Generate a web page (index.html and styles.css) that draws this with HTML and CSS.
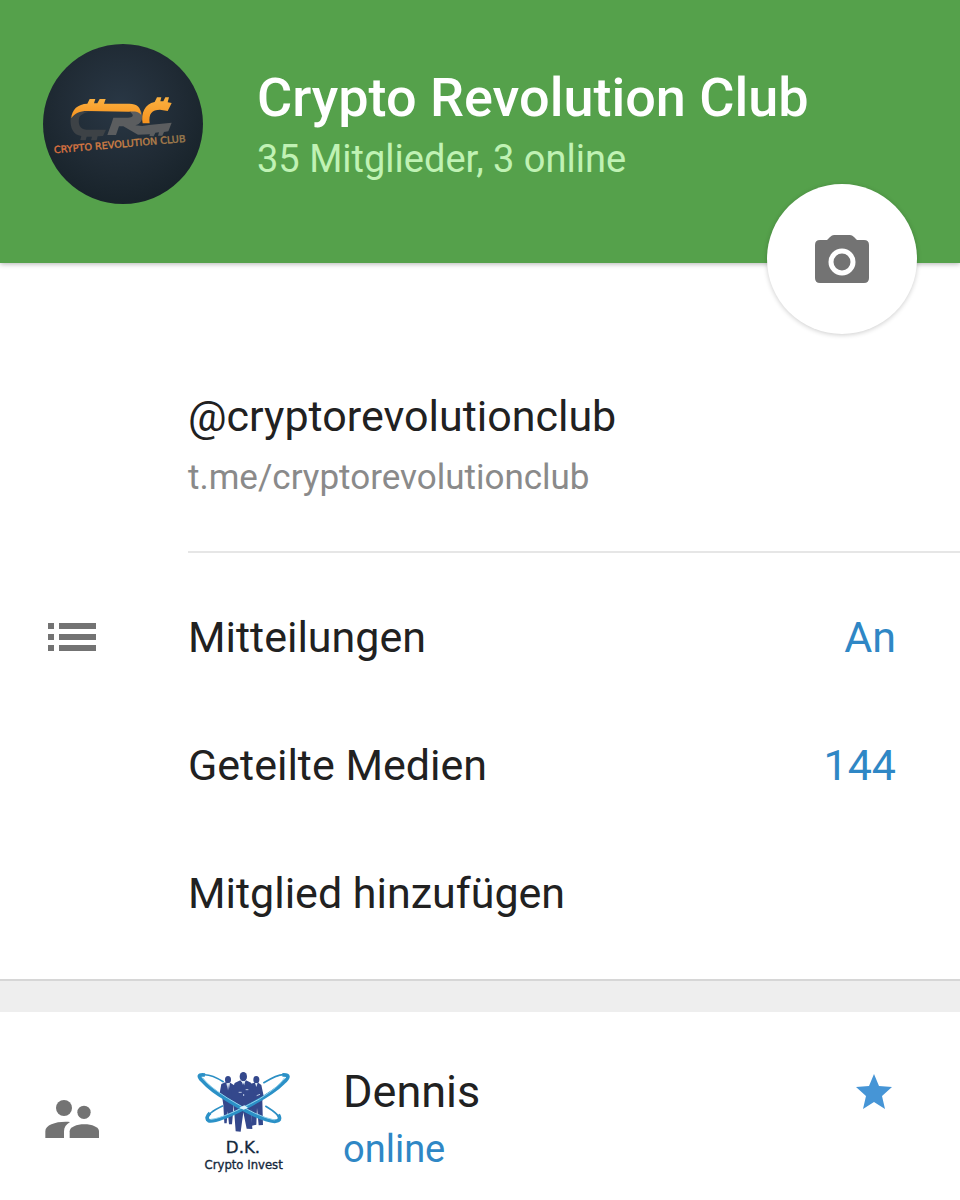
FILE: index.html
```html
<!DOCTYPE html>
<html lang="de">
<head>
    <meta charset="UTF-8">
    <meta name="viewport" content="width=device-width, initial-scale=1.0">
    <title>Crypto Revolution Club</title>
    <link rel="stylesheet" href="styles.css">
</head>
<body>
    <header class="header">
        <svg class="avatar" viewBox="27 28 480 480" role="img" aria-label="Logo">
            <defs>
                <radialGradient id="night" cx="48%" cy="38%" r="62%">
                    <stop offset="0" stop-color="#293745"/>
                    <stop offset="0.6" stop-color="#202b35"/>
                    <stop offset="1" stop-color="#18232a"/>
                </radialGradient>
                <linearGradient id="gold" x1="0" y1="0" x2="0" y2="1">
                    <stop offset="0" stop-color="#fbb040"/>
                    <stop offset="1" stop-color="#f7931e"/>
                </linearGradient>
                <linearGradient id="copper" x1="0" y1="0" x2="1" y2="0">
                    <stop offset="0" stop-color="#e0703f"/>
                    <stop offset="0.5" stop-color="#d08345"/>
                    <stop offset="1" stop-color="#9a7d4e"/>
                </linearGradient>
            </defs>
            <circle cx="267" cy="268" r="240" fill="url(#night)"/>
            <path d="M110 248 C107 280 118 302 142 304 L139 316 L155 317 L158 306 L174 306 L171 317 L188 317 L191 305 L207 304 L216 285 L157 285 C137 284 131 268 136 247 C146 234 162 231 176 231 L142 229 C123 230 112 236 110 248Z" fill="#3d4246"/>
            <path d="M238 249 L282 249 C297 249 301 240 290 234 L290 222 C314 218 325 228 325 244 C325 260 317 269 304 272 L325 274 L345 271 L413 264 L403 290 L390 292 L385 303 L372 303 L375 293 L364 294 L359 305 L346 304 L348 299 L312 300 L268 275 L255 275 L246 301 L220 301 L234 262Z" fill="#5b5d5f"/>
            <path d="M112 251 C113 224 132 208 160 207 L167 193 L184 193 L180 206 L190 206 L197 193 L215 193 L210 207 L286 207 C309 207 321 218 321 240 C312 229 299 231 285 231 L160 229 C136 229 123 236 112 251Z" fill="url(#gold)"/>
            <path d="M326 266 C320 237 332 207 362 202 L369 188 L382 188 L379 200 L388 200 L394 188 L405 188 L401 203 L413 205 L401 229 L378 225 C354 225 343 237 347 266Z" fill="url(#gold)"/>
            <text class="logo-name" x="61" y="356" transform="rotate(-5 61 356)">CRYPTO REVOLUTION CLUB</text>
        </svg>
        <div class="group">
            <h1 class="group-name">Crypto Revolution Club</h1>
            <p class="group-status">35 Mitglieder, 3 online</p>
        </div>
        <button class="camera" type="button" aria-label="Foto">
            <svg class="camera-icon" viewBox="0 0 54 48">
                <path d="M19 0H35Q37 0 39 2L42 5H49Q54 5 54 10V43Q54 48 49 48H5Q0 48 0 43V10Q0 5 5 5H12L15 2Q17 0 19 0Z" fill="#737373"/>
                <circle cx="27" cy="27" r="11" fill="#737373" stroke="#fff" stroke-width="5"/>
            </svg>
        </button>
    </header>

    <main>
        <section class="card">
            <div class="about">
                <p class="username">@cryptorevolutionclub</p>
                <a class="link" href="#">t.me/cryptorevolutionclub</a>
            </div>
            <button class="row" type="button">
                <svg class="list-icon" viewBox="0 0 48 28">
                    <path d="M0 0h6v6H0zM11 0h37v6H11zM0 11h6v6H0zM11 11h37v6H11zM0 22h6v6H0zM11 22h37v6H11z" fill="#737373"/>
                </svg>
                <span class="row-label">Mitteilungen</span>
                <span class="row-value">An</span>
            </button>
            <button class="row" type="button">
                <span class="row-label">Geteilte Medien</span>
                <span class="row-value">144</span>
            </button>
            <button class="row" type="button">
                <span class="row-label">Mitglied hinzufügen</span>
            </button>
        </section>

        <section class="members">
            <svg class="people-icon" viewBox="45 60 162 114">
                <g fill="#737373">
                    <circle cx="102" cy="84" r="24"/>
                    <circle cx="162" cy="97" r="20"/>
                    <path d="M46 174V154C46 133 83 123 120 126C108 133 102 142 102 154V174Z"/>
                    <path d="M119 174V154C119 141 140 133 163 133C186 133 207 141 207 154V174Z"/>
                </g>
            </svg>
            <svg class="member-photo" viewBox="36 38 330 330" role="img" aria-label="D.K. Crypto Invest">
                <path d="M131 92Q90 66 66 71M250 95Q300 65 317 71M256 164Q300 190 301 207M129 163Q76 187 81 209" fill="none" stroke="#2b8fc4" stroke-width="5"/>
                <g fill="#34488c">
                    <ellipse cx="144" cy="85" rx="9" ry="11"/>
                    <ellipse cx="229" cy="85" rx="9" ry="11"/>
                    <ellipse cx="190" cy="76" rx="11" ry="14"/>
                    <path d="M136 93L124 98L118 130L127 141L130 161L133 216L140 216L143 180L147 219L156 219L161 163L166 104L152 95Z"/>
                    <path d="M223 94L207 99L211 137L216 223L229 220L231 170L236 222L249 221L247 149L251 134L244 101L235 94Z"/>
                    <path d="M181 87L164 95L153 128L160 144L163 187L167 240L182 241L190 183L200 232L217 233L213 160L219 145L223 126L213 94L198 87L190 97Z"/>
                </g>
                <path d="M139 96L150 94L145 123Z M185 89L196 89L191 107Z M225 95L233 95L229 107Z" fill="#dfeaf5"/>
                <path d="M190 94L188 107L191 114L194 107Z M144 98L141 127L145 131L148 125Z" fill="#34488c"/>
                <path d="M176 123H185M197 115H205M191 128V134M230 133L240 129" stroke="#bdcbe4" stroke-width="3"/>
                <path d="M75 71Q45 67 68 89Q92 116 140 144Q240 207 284 210Q306 208 295 190" fill="none" stroke="#2b91c7" stroke-width="11"/>
                <path d="M307 71Q339 69 310 94Q279 126 190 172Q105 215 86 208Q75 199 90 185" fill="none" stroke="#2b91c7" stroke-width="11"/>
                <path d="M68 79Q82 102 142 140Q234 197 284 206M314 79Q298 106 238 143Q129 202 92 204" fill="none" stroke="#8ed0ec" stroke-width="3"/>
                <path d="M178 169L193 162L204 169L191 175Z" fill="#d9f1fb"/>
                <text class="photo-initials" x="189" y="305">D.K.</text>
                <text class="photo-name" x="191" y="354">Crypto Invest</text>
            </svg>
            <div class="member">
                <h2 class="member-name">Dennis</h2>
                <p class="member-status">online</p>
            </div>
            <svg class="star" viewBox="0 0 36 36" role="img" aria-label="Admin">
                <path d="M18 0L23 12L36 13L26 22L29 35L18 28L7 35L10 22L0 13L13 12Z" fill="#4695d6"/>
            </svg>
        </section>
    </main>
</body>
</html>
```
FILE: styles.css
```css
* {
    box-sizing: border-box;
    margin: 0;
    padding: 0;
}

body {
    background-color: #fff;
    color: #212121;
    font-family: Roboto, sans-serif;
}

button {
    border: none;
    background: none;
    color: inherit;
    font-family: inherit;
    cursor: pointer;
}

.header {
    position: relative;
    display: flex;
    gap: 54px;
    padding: 44px 43px 59px;
    background-color: #55a14b;
    box-shadow: 0 1px 5px rgba(0, 0, 0, 0.3);
}

.avatar {
    flex: none;
    width: 160px;
    height: 160px;
}

.logo-name {
    fill: url(#copper);
    stroke: url(#copper);
    stroke-width: 1px;
    font-family: "DejaVu Sans", sans-serif;
    font-size: 29px;
}

.group {
    padding-top: 22px;
}

.group-name {
    color: #fff;
    font-size: 54px;
    font-weight: 500;
    line-height: 64px;
}

.group-status {
    color: #c0f2b4;
    font-size: 38px;
    line-height: 58px;
}

/* camera button hangs over the bottom edge of the header */
.camera {
    position: absolute;
    right: 43px;
    bottom: -71px;
    display: flex;
    align-items: center;
    justify-content: center;
    width: 150px;
    height: 150px;
    border-radius: 50%;
    background-color: #fff;
    box-shadow: 0 1px 5px rgba(0, 0, 0, 0.2);
}

.camera-icon {
    width: 54px;
    height: 48px;
}

.card {
    padding: 120px 0 22px;
    border-bottom: 2px solid #d6d6d6;
}

.about {
    margin-left: 188px;
    padding-bottom: 44px;
    border-bottom: 2px solid #e6e6e6;
    margin-bottom: 20px;
}

.username {
    font-size: 43px;
    line-height: 66px;
}

.link {
    display: block;
    color: #8a8a8a;
    font-size: 35px;
    line-height: 58px;
    text-decoration: none;
}

.row {
    display: flex;
    align-items: center;
    width: 100%;
    height: 128px;
    padding: 0 64px 0 188px;
    font-size: 43px;
    text-align: left;
}

.row-value {
    color: #2f87c5;
}

.list-icon {
    flex: none;
    width: 48px;
    height: 28px;
    margin-left: -140px;
    margin-right: 92px;
}

.row-label {
    flex: 1;
}

.members {
    display: flex;
    align-items: center;
    padding: 50px 68px 20px 45px;
    border-top: 31px solid #eee;
}

.people-icon {
    flex: none;
    width: 54px;
    height: 38px;
    margin-right: 93px;
}

.member-photo {
    flex: none;
    width: 110px;
    height: 110px;
    margin-right: 41px;
}

.photo-initials,
.photo-name {
    fill: #14283c;
    stroke: #14283c;
    stroke-width: 1px;
    font-family: "DejaVu Sans", sans-serif;
    text-anchor: middle;
}

.photo-initials {
    font-size: 50px;
}

.photo-name {
    font-size: 35px;
}

.member {
    flex: 1;
}

.member-name {
    font-size: 45px;
    font-weight: 400;
    line-height: 60px;
}

.member-status {
    color: #2f87c5;
    font-size: 38px;
    line-height: 54px;
}

.star {
    flex: none;
    align-self: flex-start;
    width: 36px;
    height: 36px;
    margin-top: 12px;
}
```
